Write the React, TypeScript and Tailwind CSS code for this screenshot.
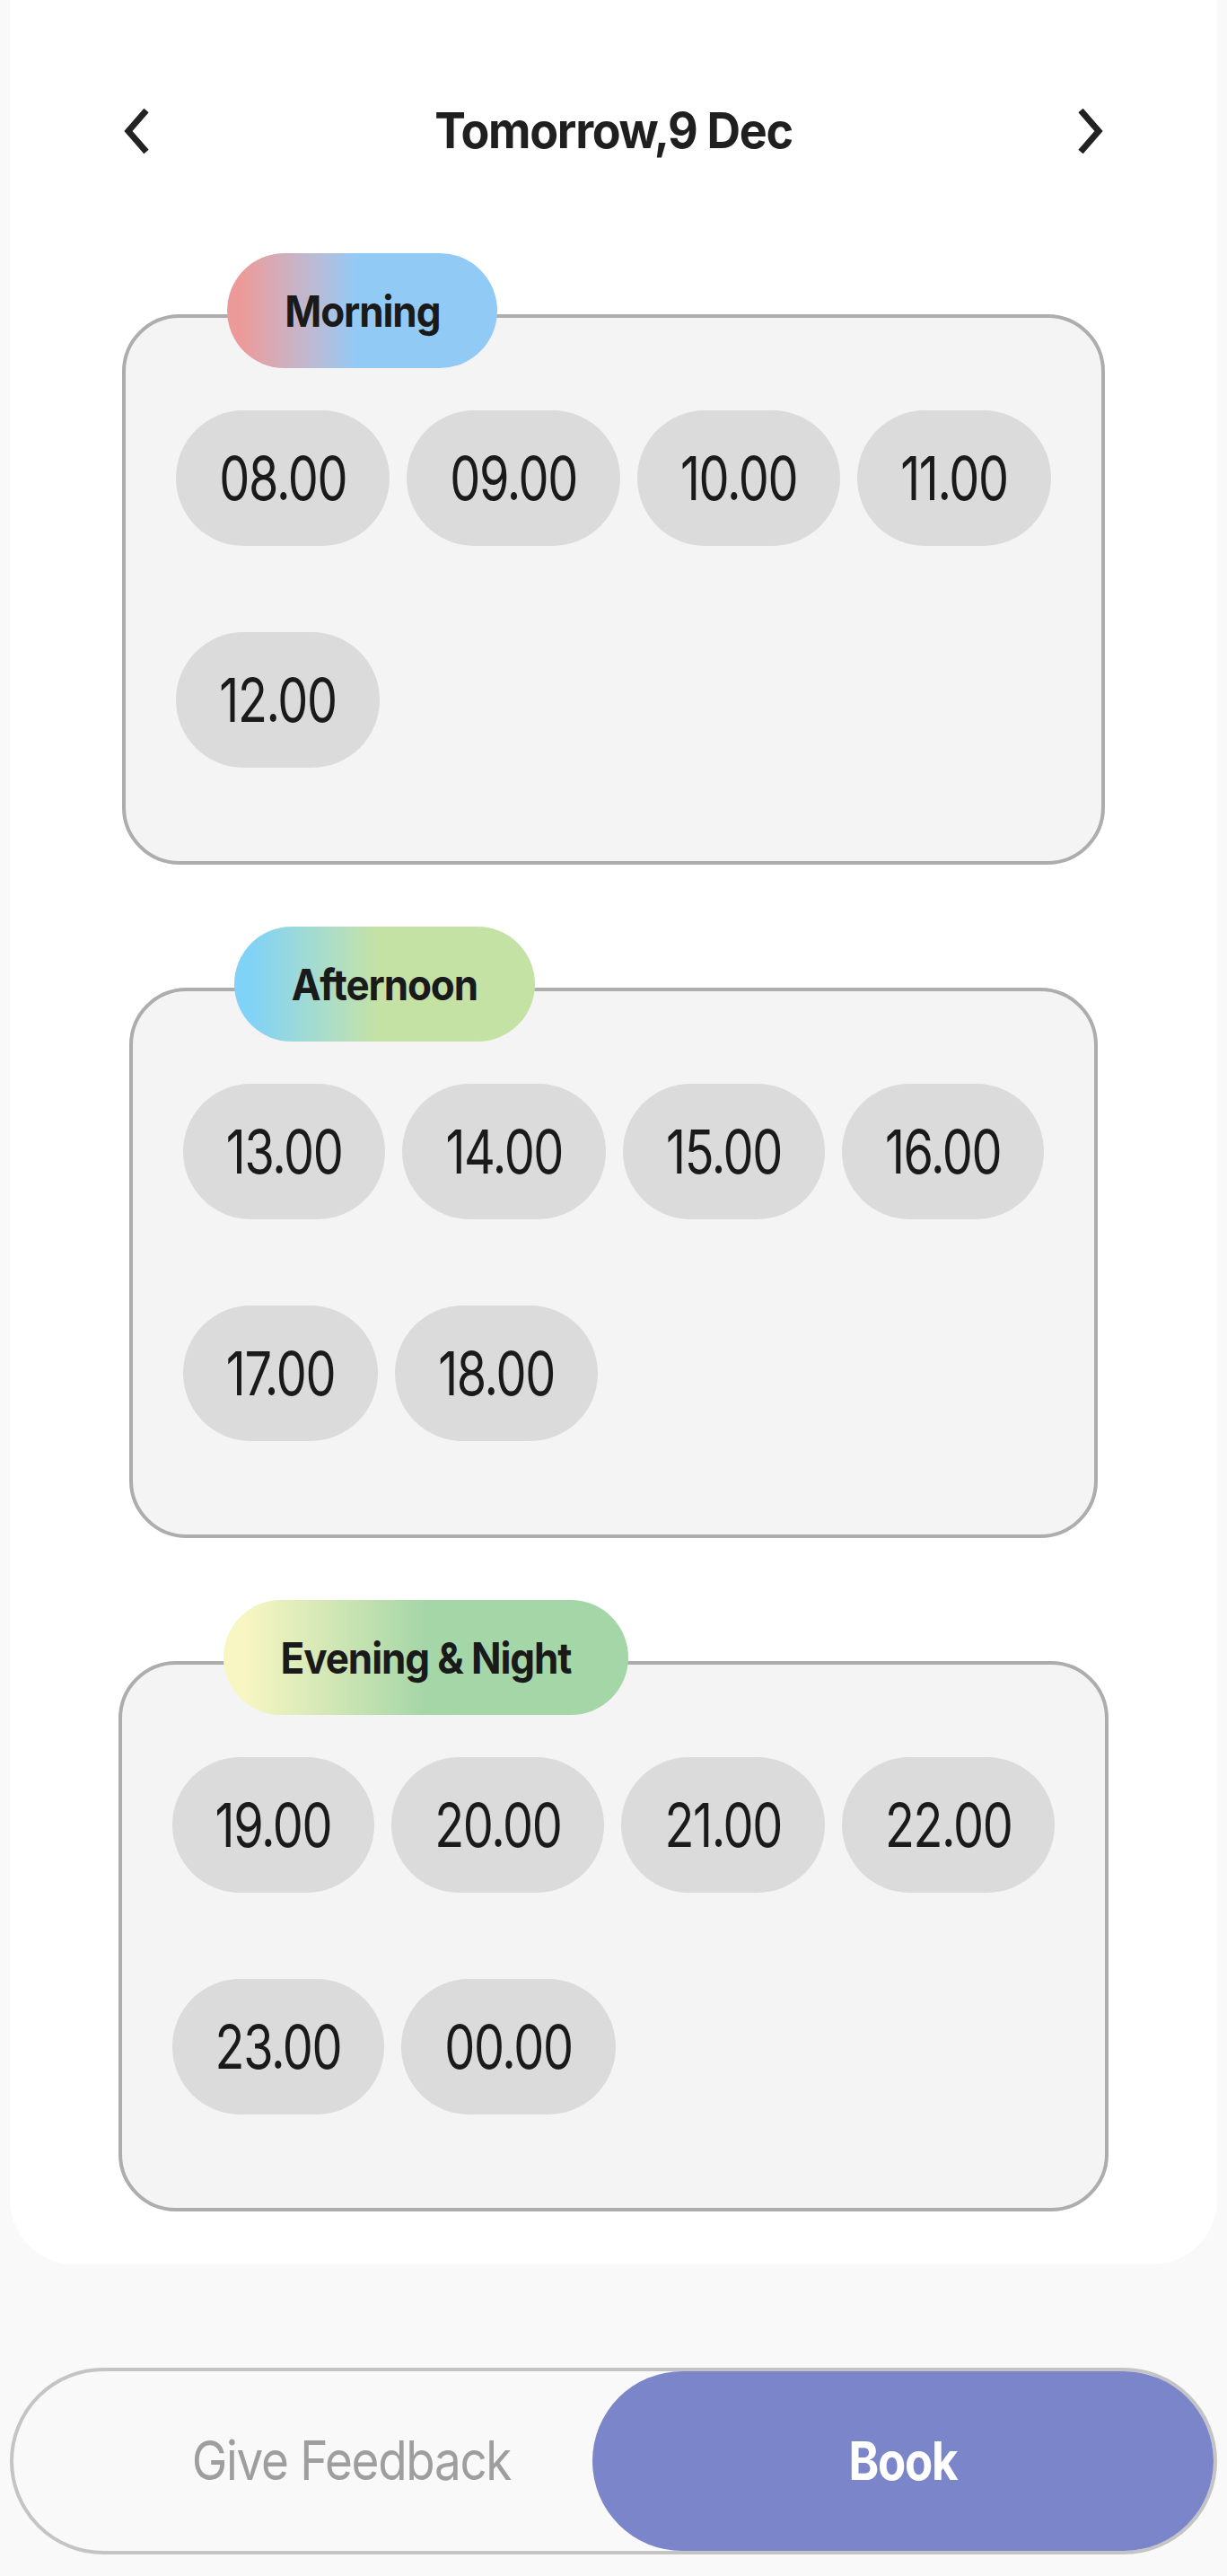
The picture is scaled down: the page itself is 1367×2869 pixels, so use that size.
import React from 'react';

interface Section {
  title: string;
  gradient: string;
  slots: string[];
}

const sections: Section[] = [
  {
    title: 'Morning',
    gradient: 'bg-linear-to-r from-[#ec9a99] from-5% to-[#92caf6] to-48%',
    slots: ['08.00', '09.00', '10.00', '11.00', '12.00'],
  },
  {
    title: 'Afternoon',
    gradient: 'bg-linear-to-r from-[#80d2f6] from-5% to-[#c5e2a5] to-48%',
    slots: ['13.00', '14.00', '15.00', '16.00', '17.00', '18.00'],
  },
  {
    title: 'Evening & Night',
    gradient: 'bg-linear-to-r from-[#f8f6c2] from-5% to-[#a5d6a7] to-50%',
    slots: ['19.00', '20.00', '21.00', '22.00', '23.00', '00.00'],
  },
];

const Chevron: React.FC<{ dir: 'left' | 'right' }> = ({ dir }) => (
  <svg width="30" height="50" viewBox="0 0 30 50" fill="none">
    <polyline
      points={dir === 'left' ? '26,2 6,25 26,48' : '4,2 24,25 4,48'}
      stroke="#222222"
      strokeWidth="7"
    />
  </svg>
);

const SlotGroup: React.FC<{ section: Section }> = ({ section }) => {
  // split slots into rows of four
  const rows: string[][] = [];
  for (let i = 0; i < section.slots.length; i += 4) {
    rows.push(section.slots.slice(i, i + 4));
  }

  return (
    <div className="relative mx-auto w-fit rounded-[64px] border-4 border-[#adadad] bg-[#f4f4f4] px-[56px] pt-[103px] pb-[104px]">
      <div
        className={`absolute -top-[72px] left-[113px] flex h-[128px] items-center rounded-full px-[64px] ${section.gradient}`}
      >
        <span className="inline-block scale-y-[1.1] font-['Inter'] text-[44px] font-bold tracking-tight text-[#1a1a1a]">
          {section.title}
        </span>
      </div>
      <div className="flex flex-col gap-[96px]">
        {rows.map((row, index) => (
          <div key={index} className="flex gap-[19px]">
            {row.map((slot) => (
              <div
                key={slot}
                className="flex h-[151px] items-center justify-center rounded-full bg-[#dbdbdb] px-[48px]"
              >
                <span className="inline-block scale-y-[1.25] font-['Inter'] text-[54px] font-normal tracking-tight text-[#1a1a1a]">
                  {slot}
                </span>
              </div>
            ))}
          </div>
        ))}
      </div>
    </div>
  );
};

const App: React.FC = () => {
  return (
    <div className="min-h-screen bg-[#f9f9f9] font-['Inter']">
      <div className="mx-[11px] rounded-b-[72px] bg-white pt-[98px] pb-[59px]">
        <div className="flex h-[96px] items-center justify-between px-[126px]">
          <Chevron dir="left" />
          <h1 className="inline-block scale-y-[1.05] text-[52px] font-bold tracking-tight text-[#1f1f1f]">
            Tomorrow,9 Dec
          </h1>
          <Chevron dir="right" />
        </div>

        <div className="mt-[156px] flex flex-col gap-[137px]">
          {sections.map((section) => (
            <SlotGroup key={section.title} section={section} />
          ))}
        </div>
      </div>

      <div className="mx-[11px] mt-[115px] flex h-[208px] rounded-full border-4 border-[#c4c4c4] bg-[#f9f9f9]">
        <button className="flex flex-1 items-center justify-center pl-[108px]">
          <span className="inline-block scale-y-[1.15] text-[53px] font-normal tracking-tight text-[#9e9e9e]">
            Give Feedback
          </span>
        </button>
        <button className="flex w-[692px] items-center justify-center rounded-full bg-[#7b86ca]">
          <span className="inline-block scale-y-[1.15] text-[51px] font-bold tracking-tight text-white">
            Book
          </span>
        </button>
      </div>
    </div>
  );
};

export default App;
